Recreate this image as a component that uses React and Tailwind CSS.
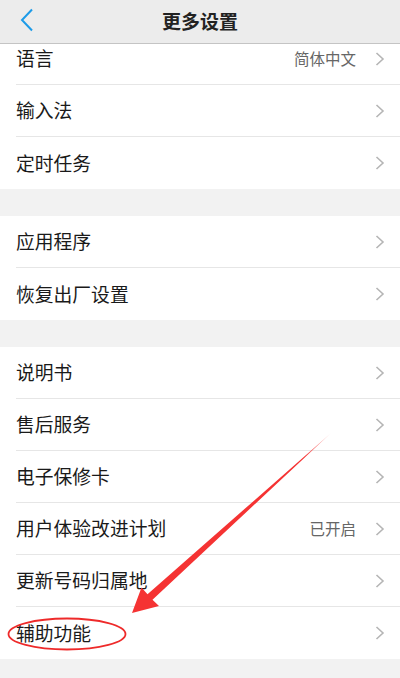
import { Fragment } from 'react'

const groups = [
  [
    { label: '语言', value: '简体中文' },
    { label: '输入法' },
    { label: '定时任务' }
  ],
  [
    { label: '应用程序' },
    { label: '恢复出厂设置' }
  ],
  [
    { label: '说明书' },
    { label: '售后服务' },
    { label: '电子保修卡' },
    { label: '用户体验改进计划', value: '已开启' },
    { label: '更新号码归属地' },
    { label: '辅助功能' }
  ]
]

function Chevron() {
  return (
    <svg width="10" height="14" viewBox="0 0 10 14" className="shrink-0">
      <path d="M1.5 1 L8 7 L1.5 13" fill="none" stroke="#b5b5b5" strokeWidth="1.6" />
    </svg>
  )
}

function Row({ label, value, last }) {
  return (
    <div className="bg-white pl-4">
      <div
        className={`flex h-[52px] items-center pr-[15px] ${last ? '' : 'border-b border-[#e6e6e6]'}`}
      >
        <span className="flex-1 text-[18.8px] text-[#1a1a1a]">{label}</span>
        {value && <span className="mr-[19px] text-[15.5px] text-[#666]">{value}</span>}
        <Chevron />
      </div>
    </div>
  )
}

export default function App() {
  return (
    <div
      className="relative h-[678px] w-[400px] overflow-hidden bg-[#f2f2f2]"
      style={{ fontFamily: '"Noto Sans CJK SC", "Noto Sans", sans-serif' }}
    >
      {/* Header */}
      <div className="relative z-10 flex h-[44px] items-center justify-center border-b border-[#c4c4c4] bg-[#ececec]">
        <svg width="14" height="24" viewBox="0 0 14 24" className="absolute left-[20px] top-[8px]">
          <path d="M12 1.5 L2 12 L12 22.5" fill="none" stroke="#1d9be8" strokeWidth="2" />
        </svg>
        <h1 className="text-[19px] font-bold text-[#222]">更多设置</h1>
      </div>

      {/* List */}
      <div className="-mt-[11px] flex flex-col">
        {groups.map((group, gi) => (
          <Fragment key={gi}>
            {gi > 0 && <div className="h-[27px]" />}
            {group.map((item, i) => (
              <Row key={item.label} {...item} last={i === group.length - 1} />
            ))}
          </Fragment>
        ))}
      </div>

      {/* Annotation */}
      <svg
        width="400"
        height="678"
        viewBox="0 0 400 678"
        className="pointer-events-none absolute inset-0"
      >
        <defs>
          <linearGradient id="tail" x1="331" y1="433" x2="150" y2="597" gradientUnits="userSpaceOnUse">
            <stop offset="0" stopColor="#f53333" stopOpacity="0.2" />
            <stop offset="0.15" stopColor="#f53333" stopOpacity="1" />
            <stop offset="1" stopColor="#f53333" />
          </linearGradient>
        </defs>
        <polygon
          points="331,433 152.5,599.8 159,606 132,613 141.5,587.5 147.5,594.2"
          fill="url(#tail)"
        />
        <ellipse cx="67" cy="634" rx="58.5" ry="15.5" fill="none" stroke="#ee2a2a" strokeWidth="1.8" />
      </svg>
    </div>
  )
}
